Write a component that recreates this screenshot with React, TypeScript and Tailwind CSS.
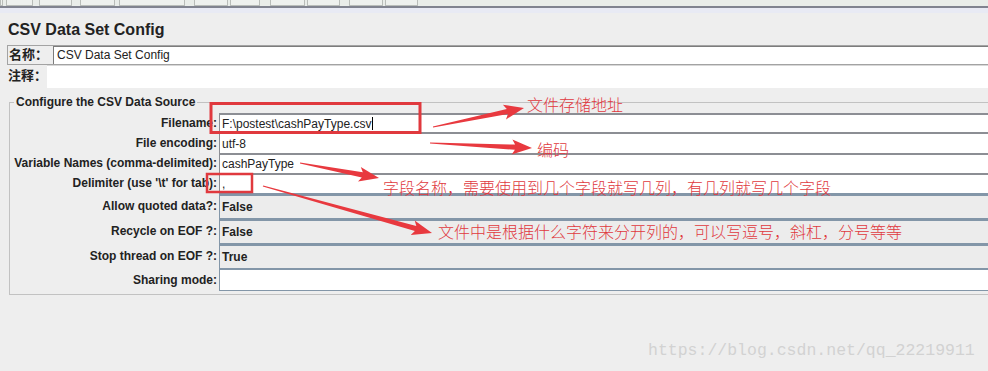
import React from 'react';

const sans = "font-['Liberation_Sans','Noto_Sans_CJK_SC',Arial,sans-serif]";

type Row = { label: string; value: string; kind: 'text' | 'combo' | 'edit'; h: string };

const rows: Row[] = [
    { label: 'Filename:', value: 'F:\\postest\\cashPayType.csv', kind: 'text', h: 'h-[19px]' },
    { label: 'File encoding:', value: 'utf-8', kind: 'text', h: 'h-[21px]' },
    { label: 'Variable Names (comma-delimited):', value: 'cashPayType', kind: 'text', h: 'h-[20px]' },
    { label: "Delimiter (use '\\t' for tab):", value: ',', kind: 'text', h: 'h-[20px]' },
    { label: 'Allow quoted data?:', value: 'False', kind: 'combo', h: 'h-[25px]' },
    { label: 'Recycle on EOF ?:', value: 'False', kind: 'combo', h: 'h-[25px]' },
    { label: 'Stop thread on EOF ?:', value: 'True', kind: 'combo', h: 'h-[25px]' },
    { label: 'Sharing mode:', value: '', kind: 'edit', h: 'h-[23px]' },
];

const toolbar = [
    [0, 3], [6, 33], [39, 72], [80, 115], [119, 185], [194, 228], [230, 260], [270, 305], [307, 340], [349, 383], [385, 418],
];

// tapered red arrow, thin at the tail and wide at the head
function arrowPoints(x1: number, y1: number, x2: number, y2: number) {
    const dx = x2 - x1;
    const dy = y2 - y1;
    const len = Math.sqrt(dx * dx + dy * dy);
    const ux = dx / len;
    const uy = dy / len;
    const nx = -uy;
    const ny = ux;
    const head = 20;
    const bx = x2 - ux * head;
    const by = y2 - uy * head;
    const pts = [
        [x1 + nx * 0.6, y1 + ny * 0.6],
        [bx + nx * 2.6 + ux * 3, by + ny * 2.6 + uy * 3],
        [bx + nx * 7.5, by + ny * 7.5],
        [x2, y2],
        [bx - nx * 7.5, by - ny * 7.5],
        [bx - nx * 2.6 + ux * 3, by - ny * 2.6 + uy * 3],
        [x1 - nx * 0.6, y1 - ny * 0.6],
    ];
    return pts.map(p => `${p[0].toFixed(1)},${p[1].toFixed(1)}`).join(' ');
}

const arrows = [
    [433, 127, 524, 108],
    [430, 143, 532, 148],
    [300, 163, 379, 178],
    [263, 186, 432, 233],
];

const notes = [
    { text: '文件存储地址', cls: 'left-[527px] top-[94px]' },
    { text: '编码', cls: 'left-[537px] top-[139px]' },
    { text: '字段名称，需要使用到几个字段就写几列，有几列就写几个字段', cls: 'left-[383px] top-[177px]' },
    { text: '文件中是根据什么字符来分开列的，可以写逗号，斜杠，分号等等', cls: 'left-[438px] top-[221px]' },
];

export default function App() {
    return (
        <div className={`relative w-[988px] h-[371px] overflow-hidden bg-[#eeeeee] text-[#222] ${sans}`}>
            {/* toolbar remnant */}
            <div className="relative h-[6px] bg-[#e9ede9]">
                {toolbar.map(([a, b]) => (
                    <div
                        key={a}
                        className="absolute top-0 h-[6px] border-x border-b border-[#b9bdb9] bg-[#eef1ee]"
                        style={{ left: a, width: b - a }}
                    />
                ))}
            </div>
            <div className="h-[2px] bg-[#80838f]" />
            <div className="h-[5px] bg-[#e8eaf4]" />

            <div className="h-[32px] pl-[8px] pt-[7px] text-[16px] font-bold leading-[20px] text-[#222]">
                CSV Data Set Config
            </div>

            <div className="ml-[7px] flex h-[20px] border border-r-0 border-[#a3a3a3]">
                <div className="w-[45px] pl-[1px] text-[13px] font-bold leading-[18px]">名称：</div>
                <div className="flex-1 border-l border-t border-[#7c7c7c] bg-white pl-[3px] text-[12px] leading-[17px]">
                    CSV Data Set Config
                </div>
            </div>
            <div className="ml-[7px] flex h-[23px]">
                <div className="w-[40px] pl-[1px] pt-[2px] text-[13px] font-bold leading-[18px]">注释：</div>
                <div className="flex-1 border-t border-[#d8d8d8] bg-white" />
            </div>

            <fieldset className="ml-[9px] mt-[7px] w-[990px] border border-[#c2c2c2] p-0 pb-[3px] pt-[4px]">
                <legend className="ml-[4px] px-[2px] text-[12px] font-bold leading-[14px]">
                    Configure the CSV Data Source
                </legend>
                {rows.map(r => (
                    <div key={r.label} className={`flex ${r.h}`}>
                        <div className="flex w-[209px] shrink-0 items-center justify-end pr-[2px] text-[12px] font-bold">
                            {r.label}
                        </div>
                        {r.kind === 'text' && (
                            <div className="flex flex-1 items-center border-l border-t-2 border-[#8c8e94] bg-white pl-[2px] text-[12px]">
                                {r.value}
                                {r.label === 'Filename:' && <span className="ml-[1px] inline-block h-[13px] w-px bg-black" />}
                            </div>
                        )}
                        {r.kind === 'combo' && (
                            <div className="flex flex-1 items-center border-l border-t-[3px] border-[#8396a8] bg-[#ececec] pl-[2px] text-[12px] font-bold">
                                {r.value}
                            </div>
                        )}
                        {r.kind === 'edit' && (
                            <div className="flex-1 border-b border-l border-t-2 border-[#8396a8] bg-white" />
                        )}
                    </div>
                ))}
            </fieldset>

            {/* annotations */}
            <svg className="absolute left-0 top-0" width="988" height="371">
                <rect x="211" y="103.5" width="209" height="29" fill="none" stroke="#e0393e" strokeWidth="3" />
                <rect x="207" y="174" width="45" height="18" fill="none" stroke="#e0393e" strokeWidth="2.5" />
                {arrows.map(([a, b, c, d]) => (
                    <polygon key={a + b} points={arrowPoints(a, b, c, d)} fill="#e8393f" />
                ))}
            </svg>
            {notes.map(n => (
                <span
                    key={n.text}
                    className={`absolute ${n.cls} whitespace-nowrap text-[16px] font-light leading-[20px] text-[#e0393e] font-['Noto_Sans_CJK_SC',sans-serif]`}
                >
                    {n.text}
                </span>
            ))}

            <span className="absolute left-[648px] top-[341px] whitespace-nowrap text-[16.5px] leading-[20px] text-[#d2d2d2] font-['Liberation_Mono',monospace]">
                https://blog.csdn.net/qq_22219911
            </span>
        </div>
    );
}
